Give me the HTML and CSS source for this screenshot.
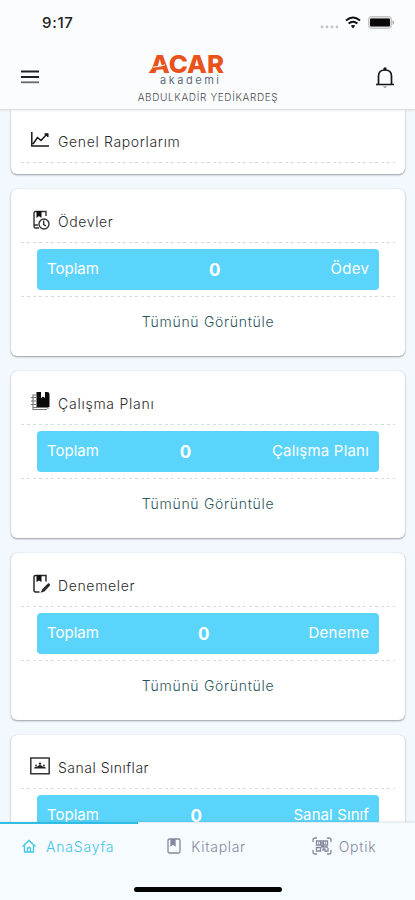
FILE: index.html
```html
<!DOCTYPE html>
<html lang="tr">
<head>
<meta charset="utf-8">
<title>Acar Akademi</title>
<link rel="stylesheet" href="styles.css">
</head>
<body>
<div class="app">
  <header class="header">
    <div class="status">
      <span class="time">9:17</span>
      <div class="status-icons">
        <svg width="19" height="4" viewBox="0 0 19 4" fill="#c3c5c7"><circle cx="2" cy="2" r="1.4"/><circle cx="7" cy="2" r="1.4"/><circle cx="12" cy="2" r="1.4"/><circle cx="17" cy="2" r="1.4"/></svg>
        <svg class="wifi" width="16" height="13" viewBox="0 0 16 13" fill="none" stroke="#111" stroke-width="2"><path d="M1 4.6Q8-1.6 15 4.6M3.6 7.600Q8 3.8 12.4 7.600"/><path d="M5.7 9.8Q8 8 10.3 9.8L8 12.300Z" fill="#111" stroke="none"/></svg>
        <svg class="battery" width="27" height="13" viewBox="0 0 27 13"><rect x=".5" y=".5" width="23" height="12" rx="3" fill="#ddd" stroke="#c4c4c4"/><rect x="2" y="2.500" width="20" height="8" rx="1" fill="#080808"/><path d="M24.500 4.300Q28 6.500 24.500 8.700Z" fill="#aaa"/></svg>
      </div>
    </div>
    <div class="toolbar">
      <svg class="menu" width="18" height="14" viewBox="0 0 18 14" fill="none" stroke-width="1.8"><path d="M0 1.500H18M0 7H18" stroke="#202325"/><path d="M0 12.300H18" stroke="#65696b"/></svg>
      <div class="brand">
        <svg class="logo" width="78" height="34" viewBox="0 0 78 34">
          <text x="2" y="21" class="logo-main" textLength="74" lengthAdjust="spacingAndGlyphs">ACAR</text>
          <path d="M.5 21L5 15.300 16 14.400 14 17.300 6.500 18 4.500 21Z" fill="#e9531b"/>
          <path d="M5 15.100Q12 14.800 17 12.800" fill="none" stroke="#fbfcfe" stroke-width="1"/>
          <text x="12" y="32" class="logo-sub" textLength="59">akademi</text>
        </svg>
        <div class="user">ABDULKADİR YEDİKARDEŞ</div>
      </div>
      <svg class="bell" width="20" height="22" viewBox="0 0 20 22" fill="none" stroke="#15181a" stroke-width="1.700"><path d="M1 17.500H19M3.500 17.500V9Q3.500 3 10 3Q16.500 3 16.500 9V17.500"/><circle cx="10" cy="2" r="1.700" fill="#15181a" stroke="none"/><path d="M8 19.500Q10 22 12 19.500Z" fill="#777" stroke="none"/></svg>
    </div>
  </header>

  <main class="feed">
    <section class="card card-report">
      <h2 class="title"><svg class="icon" viewBox="0 0 20 20" fill="none" stroke="#181818" stroke-width="1.500"><path d="M1.800 2V16H19M3 14L7.500 7.500 11 10.500 17.500 3.500M14.500 4H17.800V7"/></svg><span class="w-genel">Genel Raporlarım</span></h2>
      <div class="rule"></div>
    </section>

    <section class="card">
      <h2 class="title"><svg class="icon" viewBox="0 0 20 20" fill="none" stroke="#333" stroke-width="1.400"><path d="M9 18H5.500Q4 18 4 16.500V3Q4 1.500 5.500 1.500H16V6M4 15H8"/><path d="M6.500 1H11.500V8L9 6 6.500 8Z" fill="#111" stroke="none"/><circle cx="14" cy="14" r="5"/><path d="M13.700 10.500V14.500L16 16"/></svg><span class="w-odev">Ödevler</span></h2>
      <div class="rule"></div>
      <div class="total"><span>Toplam</span><b>0</b><span class="bar-odev">Ödev</span></div>
      <div class="rule"></div>
      <a class="more">Tümünü Görüntüle</a>
    </section>

    <section class="card">
      <h2 class="title"><svg class="icon" viewBox="0 0 20 20"><path d="M6.500 0H11V6L13 4.500 15 6V0H17Q19.500 0 19.500 2V15H6.500Z" fill="#090909"/><path d="M7 3H3V17.500H17M1 5.500H6M1 9H6M1 12.500H6M3 15.500H18V17" fill="none" stroke="#777" stroke-width="1.100"/></svg><span class="w-plan">Çalışma Planı</span></h2>
      <div class="rule"></div>
      <div class="total"><span>Toplam</span><b>0</b><span class="bar-plan">Çalışma Planı</span></div>
      <div class="rule"></div>
      <a class="more">Tümünü Görüntüle</a>
    </section>

    <section class="card">
      <h2 class="title"><svg class="icon" viewBox="0 0 20 20" fill="none" stroke="#282828" stroke-width="1.500"><path d="M9.500 18H5.500Q4 18 4 16.500V3Q4 1.500 5.500 1.500H16V7.500"/><path d="M6.500 1H11.500V8L9 6.500 6.500 8Z" fill="#111" stroke="none"/><path d="M12 17.500L13 15.500 18.500 10 19.500 11 14 16.800Z"/></svg><span class="w-deneme">Denemeler</span></h2>
      <div class="rule"></div>
      <div class="total"><span>Toplam</span><b>0</b><span class="bar-deneme">Deneme</span></div>
      <div class="rule"></div>
      <a class="more">Tümünü Görüntüle</a>
    </section>

    <section class="card">
      <h2 class="title"><svg class="icon" viewBox="0 0 20 20"><path d="M.8 2H19.200V17.700H.8Z" fill="none" stroke="#333" stroke-width="1.500"/><path d="M4 12.500Q4.200 10.300 7.500 10.600Q8 9 10 9T12.500 10.600Q15.800 10.300 16 12.500Z" fill="#222"/><circle cx="10" cy="7.600" r="1.200" fill="#222"/><circle cx="6" cy="9.300" r=".9" fill="#222"/><circle cx="14" cy="9.300" r=".9" fill="#222"/></svg><span class="w-sanal">Sanal Sınıflar</span></h2>
      <div class="rule"></div>
      <div class="total"><span>Toplam</span><b>0</b><span class="bar-sanal">Sanal Sınıf</span></div>
      <div class="rule"></div>
      <a class="more">Tümünü Görüntüle</a>
    </section>
  </main>

  <footer class="footer">
    <nav class="tabs">
      <a class="tab tab-home"><svg width="14" height="14" viewBox="0 0 14 14" fill="none" stroke="#43c5e7" stroke-width="1.300"><path d="M.5 7.500L7 1.500 13.500 7.500M2.500 6.500V13H11.500V6.500M5.500 13V9.500Q7 7.500 8.500 9.500V13"/></svg><span>AnaSayfa</span></a>
      <a class="tab tab-books"><svg width="14" height="16" viewBox="0 0 14 16" fill="none" stroke="#85889c" stroke-width="1.300"><rect x="1" y="1" width="12" height="14" rx="1.500"/><path d="M4 1V7.500L6 6 8 7.500V1" fill="#85889c"/></svg><span>Kitaplar</span></a>
      <a class="tab tab-optic"><svg width="20" height="18" viewBox="0 0 20 18" fill="none" stroke="#85889c" stroke-width="1.300"><path d="M1 5V3Q1 1 3 1H5M15 1H17Q19 1 19 3V5M19 13V15Q19 17 17 17H15M5 17H3Q1 17 1 15V13"/><path d="M4.500 4H8.500V8H4.500ZM11.500 4H15.500V8H11.500ZM4.500 10.500H8.500V14H4.500ZM10 3V10H16M11 14V12H13V14H16V11M6 6H7M13 6H14M9 9H12"/></svg><span>Optik</span></a>
    </nav>
    <div class="home-bar"></div>
  </footer>
</div>
</body>
</html>
```
FILE: styles.css
```css
* { box-sizing: border-box; }
body { margin: 0; background: #f3f8fe; font-family: Inter, "Noto Sans", sans-serif; }
.app { width: 415px; height: 900px; display: flex; flex-direction: column; overflow: hidden; }

.header { flex: none; height: 110px; background: #fbfcfe; border-bottom: 1px solid #dcdfe2; box-shadow: 0 1px 2px #0001; z-index: 1; }
.status { height: 48px; padding: 0 20px 0 42px; display: flex; justify-content: space-between; }
.time { margin-top: 13px; font-size: 15px; line-height: 20px; font-weight: 500; color: #222; letter-spacing: .7px; }
.status-icons { display: flex; align-items: flex-start; padding-top: 16px; }
.status-icons > :first-child { margin-top: 9px; }
.wifi { margin-left: 6px; }
.battery { margin-left: 7px; }
.toolbar { display: grid; grid-template-columns: 1fr 144px 1fr; padding: 4px 20px 0 21px; }
.menu { margin-top: 18px; }
.brand { display: flex; flex-direction: column; align-items: center; }
.logo { margin-right: 42px; overflow: visible; }
.logo-main { font: 800 25px Inter, sans-serif; fill: #e9531b; }
.logo-sub { font: 400 11px Inter, sans-serif; fill: #606b7d; }
.user { margin-top: 4px; font-size: 10px; line-height: 14px; font-weight: 300; color: #45484c; white-space: nowrap; letter-spacing: .65px; }
.bell { justify-self: end; margin-top: 15px; }

.feed { flex: 1; min-height: 0; overflow: hidden; padding: 0 10px 0 11px; display: flex; flex-direction: column; gap: 14.500px; }
.card { flex: none; height: 167.500px; padding: 0 10px; background: #fff; border-radius: 6px; box-shadow: 0 1px 2px #0000005c, 0 0 1px #00000030; }
.card-report { height: 64px; border-top-left-radius: 0; border-top-right-radius: 0; }
.title { margin: 0; height: 53px; padding: 12px 0 0 9px; display: flex; align-items: center; gap: 8px; font-size: 14px; font-weight: 300; color: #292b2d; white-space: nowrap; }
.card-report .title { height: 52px; padding-top: 10px; }
.icon { width: 20px; height: 20px; flex: none; margin-top: -3px; }
.w-genel { letter-spacing: .65px; }
.w-odev { letter-spacing: .6px; }
.w-plan { letter-spacing: .75px; }
.w-deneme { letter-spacing: .65px; }
.w-sanal { letter-spacing: .5px; }
.rule { height: 1px; background: repeating-linear-gradient(90deg, #d5dcdc 0 3px, transparent 3px 6px); }
.total { height: 41px; margin: 6px 16px; padding: 0 10px 1px; display: flex; justify-content: space-between; align-items: center; background: #5bd4fb; border-radius: 4px; color: #fff; font-size: 15px; }
.total b { font-size: 17px; padding-top: 2px; }
.bar-odev, .bar-deneme { letter-spacing: .3px; margin-right: -.3px; }
.bar-plan { letter-spacing: .2px; }
.bar-sanal { letter-spacing: .1px; }
.more { display: block; margin-top: 15px; text-align: center; font-size: 14px; line-height: 20px; font-weight: 300; color: #2b555e; letter-spacing: .7px; }

.footer { flex: none; height: 78px; background: #f5fbff; border-top: 1px solid #e3edf3; display: flex; flex-direction: column; align-items: center; justify-content: space-between; padding-bottom: 8px; box-shadow: 0 -1px 2px #0001; z-index: 1; }
.tabs { align-self: stretch; display: grid; grid-template-columns: repeat(3, 1fr); height: 49px; margin-top: -1px; }
.tab { display: flex; align-items: center; border-top: 2px solid transparent; padding-bottom: 3px; gap: 10px; color: #85889c; font-size: 14px; font-weight: 300; }
.tab-home { border-color: #2dbde5; color: #43c5e7; padding-left: 22px; letter-spacing: .8px; }
.tab-books { padding-left: 29px; letter-spacing: .7px; }
.tab-optic { padding-left: 35px; gap: 7px; letter-spacing: .75px; }
.home-bar { width: 148px; height: 5px; border-radius: 3px; background: #050505; }
```
